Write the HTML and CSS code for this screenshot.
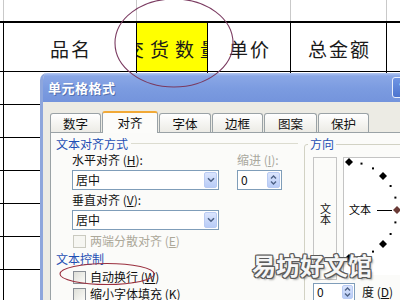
FILE: index.html
```html
<!DOCTYPE html>
<html>
<head>
<meta charset="utf-8">
<link rel="stylesheet" href="styles.css">
</head>
<body>
<div class="sheet">
  <div class="row r-top">
    <div class="c c0"></div><div class="c c1"></div><div class="c c23"></div><div class="c c4"></div><div class="c c5"></div>
  </div>
  <div class="row r-head">
    <div class="c c0"></div>
    <div class="c c1"><span class="h">品名</span></div>
    <div class="c c2 hl"><span class="h wide">交货数量</span></div>
    <div class="c c3"><span class="h">单价</span></div>
    <div class="c c4"><span class="h">总金额</span></div>
    <div class="c c5"></div>
  </div>
  <div class="row r-body"><div class="c c0"></div><div class="c c1"></div><div class="c c2"></div><div class="c c3"></div><div class="c c4"></div><div class="c c5"></div></div>
  <div class="row r-body"><div class="c c0"></div><div class="c c1"></div><div class="c c2"></div><div class="c c3"></div><div class="c c4"></div><div class="c c5"></div></div>
  <div class="row r-body"><div class="c c0"></div><div class="c c1"></div><div class="c c2"></div><div class="c c3"></div><div class="c c4"></div><div class="c c5"></div></div>
  <div class="row r-body"><div class="c c0"></div><div class="c c1"></div><div class="c c2"></div><div class="c c3"></div><div class="c c4"></div><div class="c c5"></div></div>
  <div class="row r-body"><div class="c c0"></div><div class="c c1"></div><div class="c c2"></div><div class="c c3"></div><div class="c c4"></div><div class="c c5"></div></div>
  <div class="row r-body"><div class="c c0"></div><div class="c c1"></div><div class="c c2"></div><div class="c c3"></div><div class="c c4"></div><div class="c c5"></div></div>
  <div class="row r-body"><div class="c c0"></div><div class="c c1"></div><div class="c c2"></div><div class="c c3"></div><div class="c c4"></div><div class="c c5"></div></div>
</div>

<div class="dialog">
  <div class="titlebar">
    <span class="title">单元格格式</span>
    <span class="help">?</span>
  </div>
  <div class="dbody">
    <div class="tabs">
      <div class="tab t1">数字</div>
      <div class="tab t2 active">对齐</div>
      <div class="tab t3">字体</div>
      <div class="tab t4">边框</div>
      <div class="tab t5">图案</div>
      <div class="tab t6">保护</div>
    </div>
    <div class="panel">
      <div class="col-left">
        <div class="gtitle"><span>文本对齐方式</span><i class="gline"></i></div>
        <div class="align-grid">
          <div class="lbl">水平对齐 (<u>H</u>):</div>
          <div class="lbl dim">缩进 (<u>I</u>):</div>
          <div class="combo"><span>居中</span><span class="dd"><svg width="8" height="6" viewBox="0 0 8 6"><path d="M1 1.2 L4 4.2 L7 1.2" fill="none" stroke="#4d6185" stroke-width="1.6"/></svg></span></div>
          <div class="spin"><span>0</span><span class="sb"><svg width="7" height="12" viewBox="0 0 7 12"><path d="M1 4.5 L3.5 2 L6 4.5 M1 7.5 L3.5 10 L6 7.5" fill="none" stroke="#4d6185" stroke-width="1.4"/></svg></span></div>
          <div class="lbl">垂直对齐 (<u>V</u>):</div>
          <div></div>
          <div class="combo"><span>居中</span><span class="dd"><svg width="8" height="6" viewBox="0 0 8 6"><path d="M1 1.2 L4 4.2 L7 1.2" fill="none" stroke="#4d6185" stroke-width="1.6"/></svg></span></div>
          <div></div>
        </div>
        <div class="chk dis c-first"><span class="box"></span><span>两端分散对齐 (<u>E</u>)</span></div>
        <div class="gtitle g2"><span>文本控制</span></div>
        <div class="chk c-wrap"><span class="box"></span><span>自动换行 (<u>W</u>)</span></div>
        <div class="chk c-shrink"><span class="box"></span><span>缩小字体填充 (<u>K</u>)</span></div>
      </div>
      <fieldset class="dir">
        <legend>方向</legend>
        <div class="dir-in">
          <div class="dir-top">
            <div class="vbox"><span class="vtext">文本</span></div>
            <div class="arc">
              <svg width="80" height="118" viewBox="0 0 80 118">
                <g fill="#000">
                  <polygon points="5,0 9,4 5,8 1,4"/>
                  <rect x="16.5" y="4.6" width="2" height="2"/>
                  <rect x="28" y="9.4" width="2" height="2"/>
                  <polygon points="39,14 43,18 39,22 35,18"/>
                  <rect x="45.6" y="27" width="2" height="2"/>
                  <rect x="50.4" y="38.6" width="2" height="2"/>
                  <rect x="50.4" y="63.4" width="2" height="2"/>
                  <rect x="45.6" y="75" width="2" height="2"/>
                  <polygon points="39,82 43,86 39,90 35,86"/>
                  <rect x="28" y="92.6" width="2" height="2"/>
                  <rect x="16.5" y="97.4" width="2" height="2"/>
                  <polygon points="5,96 9,100 5,104 1,100"/>
                </g>
                <polygon points="53,48 57,52 53,56 49,52" fill="#6a3a36"/>
                <text x="5" y="56" class="arc-text">文本</text>
                <line x1="33" y1="52.5" x2="48" y2="52.5" stroke="#000" stroke-width="1"/>
              </svg>
            </div>
          </div>
          <div class="deg">
            <div class="spin small"><span>0</span><span class="sb"><svg width="7" height="12" viewBox="0 0 7 12"><path d="M1 4.5 L3.5 2 L6 4.5 M1 7.5 L3.5 10 L6 7.5" fill="none" stroke="#4d6185" stroke-width="1.4"/></svg></span></div>
            <span class="deg-lbl">度 (<u>D</u>)</span>
          </div>
        </div>
      </fieldset>
    </div>
  </div>
</div>

<div class="wm">易坊好文馆</div>

<svg class="marks" width="400" height="300" viewBox="0 0 400 300">
  <ellipse cx="174" cy="43" rx="59" ry="44" fill="none" stroke="#7a3a60" stroke-width="1.1"/>
  <ellipse cx="107" cy="274" rx="47" ry="10.5" fill="none" stroke="#9a2f3e" stroke-width="1.1"/>
</svg>
</body>
</html>
```

FILE: styles.css
```css
* { box-sizing: border-box; }
html, body { margin: 0; padding: 0; }
body {
  width: 400px;
  height: 300px;
  overflow: hidden;
  position: relative;
  background: #fff;
  font-family: "Noto Sans CJK SC", "Noto Sans", sans-serif;
  color: #111;
}

/* spreadsheet */
.sheet { display: flex; flex-direction: column; }
.row { display: flex; }
.c { flex: none; }
.c0 { width: 4px; }
.c1 { width: 133px; }
.c23 { width: 154px; }
.c2 { width: 71px; }
.c3 { width: 83px; }
.c4 { width: 96px; }
.c5 { flex: 1; }

.r-top { height: 21px; }
.r-top .c { border-right: 1px solid #c9c9c9; }
.r-top .c5 { border-right: none; }

.r-head {
  height: 51px;
  border-top: 2px solid #000;
  border-bottom: 1px solid #000;
}
.r-head .c {
  border-right: 1px solid #000;
  display: flex;
  align-items: center;
  justify-content: center;
  overflow: hidden;
  padding-top: 3px;
}
.r-head .c5 { border-right: none; }
.hl { background: #ffff00; }
.h {
  flex: none;
  font-size: 19px;
  letter-spacing: 2px;
  margin-left: 2px;
  white-space: nowrap;
  color: #1a1a1a;
}
.h.wide { letter-spacing: 6px; margin-left: 6px; }

.r-body { height: 33px; border-bottom: 1px solid #000; }
.r-body .c { border-right: 1px solid #000; }
.r-body .c5 { border-right: none; }

/* dialog */
.dialog {
  position: absolute;
  left: 40px;
  top: 73px;
  width: 380px;
  height: 240px;
  border-radius: 7px 7px 0 0;
  background: #ecebe4;
  border-left: 3px solid #8ea6dc;
  overflow: hidden;
  display: flex;
  flex-direction: column;
}
.titlebar {
  height: 29px;
  flex: none;
  display: flex;
  align-items: center;
  padding-left: 5px;
  background: linear-gradient(180deg, #b4c8f2 0, #8aa7e6 3px, #7b9be0 55%, #7494dc 100%);
}
.title {
  color: #fff;
  font-size: 13px;
  font-weight: 700;
  letter-spacing: 0.5px;
  text-shadow: 1px 1px 0 #5571b0;
}
.help {
  margin-left: auto;
  margin-right: 7px;
  width: 21px;
  height: 21px;
  border: 1px solid #e8eefc;
  border-radius: 3px;
  background: linear-gradient(180deg, #6f95e4, #4c74cf);
  color: #fff;
  font-family: "DejaVu Sans", sans-serif;
  font-weight: 700;
  font-size: 13px;
  display: flex;
  align-items: center;
  justify-content: center;
}
.dbody {
  flex: 1;
  display: flex;
  flex-direction: column;
  padding: 9px 0 0 7px;
}
.tabs {
  display: flex;
  align-items: flex-end;
  gap: 1px;
  height: 21px;
  flex: none;
}
.tab {
  height: 19px;
  border: 1px solid #9aa2a6;
  border-bottom: none;
  border-radius: 3px 3px 0 0;
  background: linear-gradient(180deg, #ffffff, #ecebe5);
  font-size: 12.5px;
  display: flex;
  align-items: center;
  justify-content: center;
  color: #111;
}
.t1 { width: 51px; }
.t2 { width: 56px; }
.t3 { width: 52px; }
.t4 { width: 51px; }
.t5 { width: 53px; }
.t6 { width: 51px; }
.tab.active {
  height: 22px;
  margin-bottom: -1px;
  background: #fcfcfa;
  border-top: 2px solid #f1a936;
  position: relative;
  z-index: 1;
  padding-bottom: 1px;
}
.panel {
  flex: 1;
  display: flex;
  align-items: flex-start;
  border: 1px solid #9aa2a6;
  border-right: none;
  border-bottom: none;
  background: #fbfbf9;
  padding-top: 4px;
}
.col-left {
  width: 253px;
  flex: none;
  padding-left: 5px;
  display: flex;
  flex-direction: column;
}
.gtitle {
  display: flex;
  align-items: center;
  height: 13px;
  font-size: 12px;
  line-height: 13px;
  color: #1f4fb4;
}
.gline {
  flex: 1;
  height: 1px;
  background: #dcdcd0;
  margin: 0 6px 0 3px;
}
.g2 { margin-top: 4px; }
.align-grid {
  display: grid;
  grid-template-columns: 147px 45px;
  grid-template-rows: 14px 20px 14px 20px;
  column-gap: 18px;
  row-gap: 3px;
  margin: 3px 0 0 16px;
}
.lbl {
  font-size: 12px;
  line-height: 14px;
  white-space: nowrap;
  color: #151515;
}
.lbl.dim { color: #a9a89e; }
.combo, .spin {
  border: 1px solid #7f9db9;
  background: #fff;
  display: flex;
  align-items: center;
  justify-content: space-between;
  padding: 0 1px 0 3px;
  font-size: 12px;
  line-height: 14px;
}
.dd, .sb {
  width: 13px;
  height: 16px;
  border: 1px solid #b9cbf3;
  border-radius: 2px;
  background: linear-gradient(180deg, #dbe5fd, #b8ccf7);
  display: flex;
  align-items: center;
  justify-content: center;
}
.spin.small {
  width: 42px;
  height: 18px;
}
.spin.small .sb { height: 14px; width: 11px; }

.chk {
  display: flex;
  align-items: center;
  gap: 4px;
  height: 14px;
  font-size: 12px;
  line-height: 14px;
  margin-left: 17px;
  white-space: nowrap;
}
.box {
  width: 13px;
  height: 13px;
  flex: none;
  border: 1px solid #8a8f96;
  background: linear-gradient(135deg, #dedfd8, #fbfbf8);
}
.chk.dis { color: #aca899; }
.chk.dis .box { border-color: #cacac0; background: #f6f6f2; }
.c-first { margin-top: 4px; }
.c-wrap { margin-top: 5px; }
.c-shrink { margin-top: 3px; }

/* direction group */
.dir {
  margin: 0;
  padding: 0;
  border: 1px solid #d2d2c4;
  border-radius: 3px;
  width: 120px;
  height: 175px;
  flex: none;
}
.dir legend {
  font-size: 12px;
  line-height: 14px;
  padding: 0 2px;
  margin-left: 3px;
  color: #1f4fb4;
}
.dir-in { padding: 6px 0 0 8px; }
.dir-top { display: flex; gap: 6px; }
.vbox {
  width: 24px;
  height: 123px;
  border: 1px solid #c4c4c4;
  background: #fbfbf9;
  display: flex;
  justify-content: center;
  padding-top: 45px;
}
.vtext {
  font-size: 11px;
  line-height: 11px;
  width: 11px;
  writing-mode: vertical-rl;
  letter-spacing: 0;
}
.arc {
  width: 80px;
  height: 118px;
  background: #fff;
  border-left: 1px solid #c4c4c4;
  border-top: 1px solid #c4c4c4;
}
.arc svg { display: block; }
.arc-text {
  font-family: "Noto Sans CJK SC", sans-serif;
  font-size: 11px;
}
.deg {
  display: flex;
  align-items: center;
  gap: 7px;
  margin-top: 3px;
}
.deg-lbl { font-size: 12px; line-height: 14px; }

/* watermark */
.wm {
  position: absolute;
  left: 252px;
  top: 250px;
  font-size: 24px;
  line-height: 30px;
  font-weight: 700;
  color: #f6f6f6;
  white-space: nowrap;
  text-shadow:
    1px 0 0 #5a5a5a, -1px 0 0 #5a5a5a, 0 1px 0 #5a5a5a, 0 -1px 0 #5a5a5a,
    1px 1px 0 #5a5a5a, -1px -1px 0 #5a5a5a, 1px -1px 0 #5a5a5a, -1px 1px 0 #5a5a5a,
    2px 2px 2px rgba(0,0,0,0.35);
}

.marks {
  position: absolute;
  left: 0;
  top: 0;
  pointer-events: none;
}
```
